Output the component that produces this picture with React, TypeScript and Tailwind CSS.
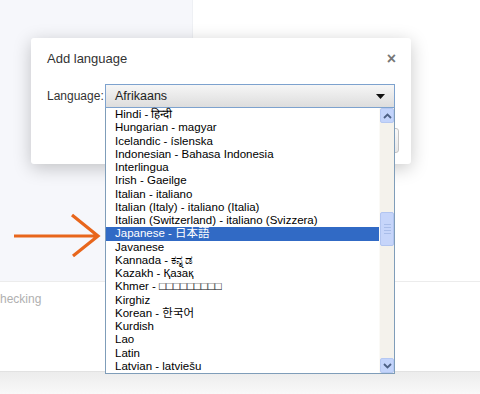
import React from "react";

const languages = [
  "Hindi - हिन्दी",
  "Hungarian - magyar",
  "Icelandic - íslenska",
  "Indonesian - Bahasa Indonesia",
  "Interlingua",
  "Irish - Gaeilge",
  "Italian - italiano",
  "Italian (Italy) - italiano (Italia)",
  "Italian (Switzerland) - italiano (Svizzera)",
  "Japanese - 日本語",
  "Javanese",
  "Kannada - ಕನ್ನಡ",
  "Kazakh - Қазақ",
  "Khmer - □□□□□□□□□",
  "Kirghiz",
  "Korean - 한국어",
  "Kurdish",
  "Lao",
  "Latin",
  "Latvian - latviešu",
];

const selected = "Japanese - 日本語";

function Chevron({ down }: { down?: boolean }) {
  return (
    <svg width="9" height="6" viewBox="0 0 9 6">
      <path
        d={down ? "M1 1 L4.5 4.5 L8 1" : "M1 5 L4.5 1.5 L8 5"}
        fill="none"
        stroke="#4d6185"
        strokeWidth="1.8"
      />
    </svg>
  );
}

function LanguageList() {
  return (
    <div className="absolute z-10 left-0 top-full w-[290px] h-[266px] bg-white border border-[#7f9db9] border-t-0 flex font-['Liberation_Sans','DejaVu_Sans','Noto_Sans_CJK_JP',sans-serif] text-[11.5px] text-black">
      <ul className="flex-1">
        {languages.map((lang) => (
          <li
            key={lang}
            className={
              "h-[13.25px] leading-[13.25px] pl-[9px] whitespace-nowrap " +
              (lang === selected ? "bg-[#316ac5] text-white" : "")
            }
          >
            {lang}
          </li>
        ))}
      </ul>
      {/* Scrollbar */}
      <div className="w-[15px] bg-[#f4f2ec] flex flex-col justify-between border-l border-[#fbfaf7]">
        <div className="h-[15px] bg-[#c3d4fb] border border-[#b5c8f2] rounded-[2px] flex items-center justify-center">
          <Chevron />
        </div>
        <div className="flex-1 relative">
          <div className="absolute left-0 right-0 top-[89px] h-[34px] bg-[#c6d5fa] border border-[#b2c5f0] rounded-[2px] flex flex-col items-center justify-center gap-[2px]">
            <div className="w-[7px] h-px bg-[#a9bde9]" />
            <div className="w-[7px] h-px bg-[#a9bde9]" />
            <div className="w-[7px] h-px bg-[#a9bde9]" />
            <div className="w-[7px] h-px bg-[#a9bde9]" />
          </div>
        </div>
        <div className="h-[15px] bg-[#c3d4fb] border border-[#b5c8f2] rounded-[2px] flex items-center justify-center">
          <Chevron down />
        </div>
      </div>
    </div>
  );
}

function AddLanguageDialog() {
  return (
    <div className="absolute left-[31px] top-[38px] w-[380px] h-[126px] bg-white rounded-[3px] shadow-[0_4px_18px_rgba(0,0,0,0.22)] font-['Liberation_Sans','Noto_Sans',sans-serif] text-[#333]">
      <div className="absolute right-[12px] bottom-[11px] w-[70px] h-[25px] rounded-[3px] border border-[#c4c4c4] bg-gradient-to-b from-[#fafafa] to-[#e8e8e8]" />
      <div className="flex items-center justify-between pl-[16px] pr-[15px] pt-[12px]">
        <span className="text-[13px] leading-[18px]">Add language</span>
        <span className="text-[16px] leading-[18px] font-bold text-[#777]">×</span>
      </div>
      <div className="flex items-center pl-[16px] mt-[16px]">
        <span className="text-[12px] w-[58px]">Language:</span>
        <div className="relative">
          <div className="w-[290px] h-[24px] border border-[#7da2ce] bg-gradient-to-b from-[#f6f6f6] to-[#dddddd] flex items-center justify-between pl-[9px] pr-[9px] text-[12.5px] text-[#222]">
            <span>Afrikaans</span>
            <svg width="9" height="5" viewBox="0 0 9 5">
              <path d="M0 0 H9 L4.5 5 Z" fill="#111" />
            </svg>
          </div>
          <LanguageList />
        </div>
      </div>
    </div>
  );
}

export default function App() {
  return (
    <div className="relative w-[480px] h-[394px] overflow-hidden bg-white flex flex-col font-['Liberation_Sans',sans-serif]">
      <div className="flex h-[281px]">
        <div className="w-[193px] bg-[#f6f7fb] border-r border-[#eef0f4]" />
        <div className="flex-1 bg-white" />
      </div>
      <div className="flex-1 border-t border-[#ececec] bg-white">
        <div className="text-[12px] text-[#b0b0b0] mt-[8px]">hecking</div>
      </div>
      <div className="h-[23px] border-t border-[#e2e2e2] bg-gradient-to-b from-[#ececec] to-[#f9f9f9]" />

      <AddLanguageDialog />

      {/* Orange pointer arrow */}
      <svg
        className="absolute left-[12px] top-[212px]"
        width="92"
        height="48"
        viewBox="0 0 92 48"
      >
        <path
          d="M2 24 H86 M60 3 L86 24 L61 44"
          fill="none"
          stroke="#e8661c"
          strokeWidth="3.2"
        />
      </svg>
    </div>
  );
}
